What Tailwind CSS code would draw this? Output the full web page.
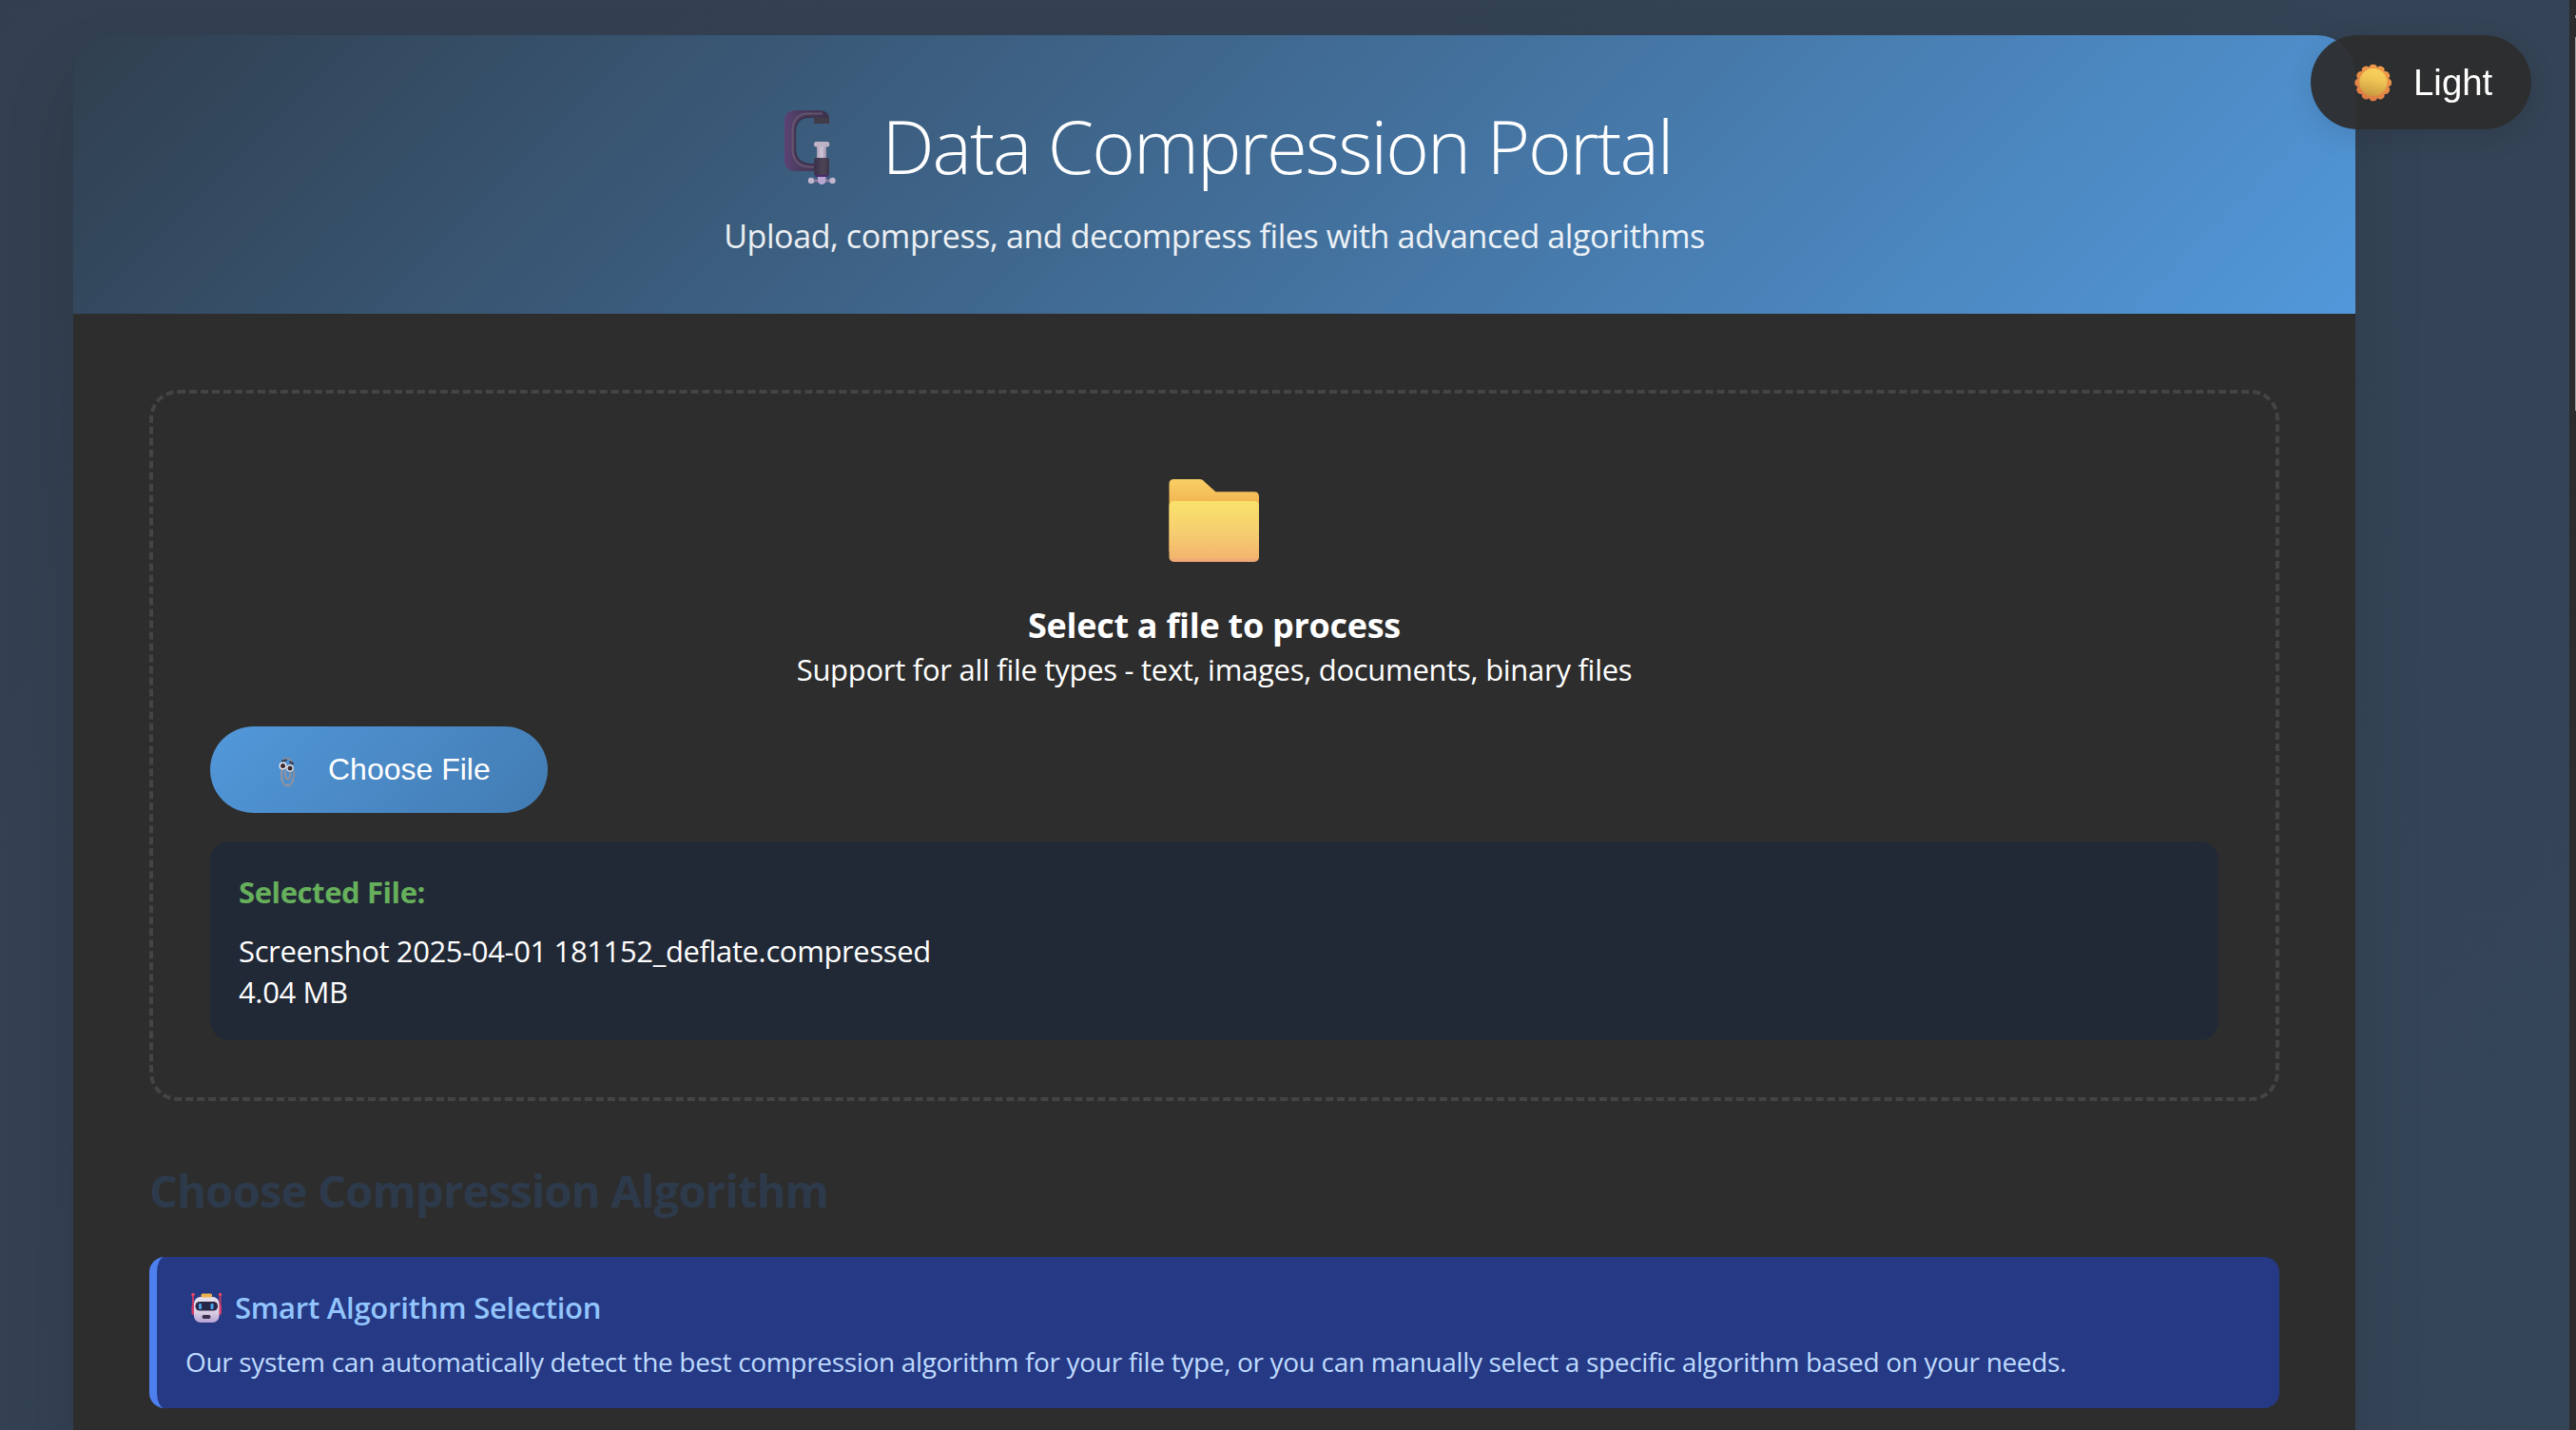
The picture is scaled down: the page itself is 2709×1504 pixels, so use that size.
<!DOCTYPE html>
<html lang="en">
<head>
<meta charset="utf-8">
<title>Data Compression Portal</title>
<script src="https://cdn.jsdelivr.net/npm/@tailwindcss/browser@4"></script>
</head>
<body class="h-[1504px] w-[2709px] overflow-hidden font-['Open_Sans',sans-serif] text-white">
<div class="flex h-full w-full">
  <div class="h-full w-[2702px] overflow-hidden bg-[linear-gradient(135deg,#323f50,#354558)] pt-[37px] pl-[77px]">
    <main class="h-[1600px] w-[2400px] overflow-hidden rounded-t-[40px] bg-[#2d2d2d] shadow-[0_40px_80px_rgba(0,0,0,0.1)]">
      <header class="h-[293px] bg-[linear-gradient(135deg,#303f4f,#5298da)] pt-[60px]">
        <h1 class="flex items-center justify-center gap-[22px] text-[78px] leading-[112px] font-light tracking-[-1.95px]">
          <svg class="h-[110px] w-[110px]" viewBox="796 98 110 110">
            <defs>
              <linearGradient id="frame" x1="0" x2="1"><stop offset="0" stop-color="#5d4176"/><stop offset=".25" stop-color="#4f3d63"/><stop offset="1" stop-color="#3b3049"/></linearGradient>
              <linearGradient id="rod" x1="0" x2="1"><stop offset="0" stop-color="#a99cb5"/><stop offset=".5" stop-color="#d0c8da"/><stop offset="1" stop-color="#9d90ab"/></linearGradient>
              <linearGradient id="nut" x1="0" x2="1"><stop offset="0" stop-color="#3b2f49"/><stop offset=".6" stop-color="#4d4657"/><stop offset="1" stop-color="#3c3447"/></linearGradient>
            </defs>
            <path fill="url(#frame)" d="M837 116H863Q873 116 873 126V130H857.500V124H850Q838 125 838 139V158Q839 171 852 172H858V180H837Q826 179 826 168V128Q826 117 837 116Z"/>
            <path fill="none" stroke="#65566f" stroke-width="2" d="M866 119.500H849Q834.500 121 834.500 138V159Q836 174 850 175.500H857"/>
            <path fill="none" stroke="#3c3149" stroke-width="1.500" d="M858 123.200H850Q837.300 124.500 837.300 139V158Q838.500 171.500 852 172.700H857"/>
            <rect x="857.300" y="123.500" width="15.700" height="6.500" rx="1" fill="#423b48"/>
            <rect x="860" y="153" width="10" height="15" fill="url(#rod)"/>
            <rect x="857" y="149" width="16.300" height="5.500" rx="2.500" fill="#bdb3c4"/>
            <rect x="857.300" y="166" width="15.700" height="19" rx="2" fill="url(#nut)"/>
            <rect x="858.500" y="184" width="13.500" height="2" fill="#4a2869"/>
            <rect x="854" y="188.700" width="23" height="2.800" fill="#92779f"/>
            <circle cx="854" cy="190" r="3.200" fill="#c2b6ce"/><circle cx="876.500" cy="190" r="3.200" fill="#c2b6ce"/>
            <path d="M861 186H869.500V190Q869 194 865.300 194T861 190Z" fill="#b7a6cf"/>
          </svg>
          <span>Data Compression Portal</span>
        </h1>
        <p class="mt-[15px] text-center text-[34px] leading-[48px] tracking-[-0.4px] text-white/90">Upload, compress, and decompress files with advanced algorithms</p>
      </header>

      <div class="p-20">
        <section class="h-[748px] rounded-[30px] border-4 border-dashed border-[#444] px-[60px] pt-[60px]">
          <div class="flex h-[161px] justify-center pt-[10px]">
            <svg class="h-32 w-32" viewBox="1213 484 128 128">
              <defs>
                <linearGradient id="fback" x1="0" x2="0" y1="0" y2="1"><stop offset="0" stop-color="#f9cf66"/><stop offset=".28" stop-color="#f3b955"/><stop offset="1" stop-color="#f0b050"/></linearGradient>
                <linearGradient id="ffront" x1="0" x2="0" y1="0" y2="1"><stop offset="0" stop-color="#f9e26c"/><stop offset=".5" stop-color="#f6cf70"/><stop offset=".92" stop-color="#f3b66e"/><stop offset="1" stop-color="#eda377"/></linearGradient>
              </defs>
              <path fill="url(#fback)" d="M1234.500 504H1262Q1265 504 1267 507L1278.500 517.300H1319Q1324 517.300 1324 522.500V580H1229.500V509Q1229.500 504 1234.500 504Z"/>
              <rect x="1229.500" y="527" width="94.500" height="64" rx="5" fill="url(#ffront)"/>
            </svg>
          </div>
          <h3 class="text-center text-[36px] leading-[46px] font-bold tracking-[-0.28px]">Select a file to process</h3>
          <p class="text-center text-[31px] leading-[46px] tracking-[-0.28px]">Support for all file types - text, images, documents, binary files</p>
          <button class="mt-[37px] flex h-[91px] w-[355px] items-center gap-5 rounded-full bg-[linear-gradient(135deg,#5298da,#427bb2)] pl-[60px] font-['Liberation_Sans',Arial,sans-serif] text-[32px]">
            <svg class="h-11 w-11 shrink-0" viewBox="281 787.500 44 44" fill="none" stroke-linecap="round">
              <path stroke="#8e8c93" stroke-width="1.800" d="M298 799C300 796 306 796 307.500 803M296.500 809V818C297 829 308 829 308.500 818L309.500 811M300 810V814C300 821 305.500 821 305.500 814V810"/>
              <path stroke="#aaa5aa" stroke-width=".7" d="M296 810V818C297 826 306 829 308 819M300 811V815C301 819 304 819 305 814"/>
              <circle cx="297.500" cy="805" r="4" fill="#e9e6ea"/><circle cx="305" cy="807.500" r="3.800" fill="#e9e6ea"/>
              <circle cx="297.500" cy="805" r="2.500" fill="#392b32"/><circle cx="305" cy="807.500" r="2.500" fill="#392b32"/>
              <path stroke="#3b3f50" stroke-width="2" d="M297 799.800L301 799M305 801L308 802.500"/>
            </svg>
            <span class="-mt-0.5 whitespace-nowrap">Choose File</span>
          </button>
          <div class="mt-[30px] h-[209px] rounded-[20px] bg-[#222936] px-[30px] pt-[30px] text-[31px] leading-[43px]">
            <h4 class="mb-[18px] leading-[46px] font-bold tracking-[-0.4px] text-[#66b05c]">Selected File:</h4>
            <p class="tracking-[-0.37px]">Screenshot 2025-04-01 181152_deflate.compressed</p>
            <p class="tracking-[-0.37px]">4.04 MB</p>
          </div>
        </section>

        <h2 class="mt-[62px] text-[47px] leading-[64px] font-bold tracking-[-0.75px] text-[#2d3a4b]">Choose Compression Algorithm</h2>

        <section class="mt-[38px] h-[159px] rounded-2xl border-l-8 border-[#4d80ee] bg-[#253985] pt-[31px] pl-[30px]">
          <h4 class="flex items-center gap-2 text-[31px] leading-[44px] font-semibold tracking-[-0.25px] text-[#93c5fd]">
            <svg class="h-11 w-11" viewBox="195 1353 44 44">
              <defs>
                <linearGradient id="bot" x1="0" x2="0" y1="0" y2="1"><stop offset="0" stop-color="#e9e2ee"/><stop offset=".6" stop-color="#d9cee3"/><stop offset="1" stop-color="#b9a2d4"/></linearGradient>
              </defs>
              <path d="M203 1361V1381M231.500 1361V1381" stroke="#c33a67" stroke-width="2"/>
              <circle cx="203" cy="1361.500" r="1.800" fill="#e8485f"/><circle cx="231.500" cy="1361.500" r="1.800" fill="#e8485f"/>
              <rect x="201.500" y="1372" width="5" height="11" rx="2" fill="#d23c66"/><rect x="228" y="1372" width="5" height="11" rx="2" fill="#d23c66"/>
              <rect x="204" y="1364" width="26.500" height="27" rx="7" fill="url(#bot)"/>
              <rect x="211.500" y="1360.500" width="11.500" height="4" rx="1.500" fill="#eeb44a"/>
              <rect x="205.500" y="1369" width="23.500" height="9.500" rx="4.500" fill="#292748"/>
              <rect x="209" y="1371" width="3" height="6" rx="1.200" fill="#49a4e8"/><rect x="221.500" y="1371" width="3" height="6" rx="1.200" fill="#49a4e8"/>
              <rect x="212.500" y="1383" width="9" height="4" rx="2" fill="#38304d"/>
            </svg>
            <span>Smart Algorithm Selection</span>
          </h4>
          <p class="mt-[15px] text-[28px] leading-[40px] tracking-[-0.33px] whitespace-nowrap text-[#bfdbfe]">Our system can automatically detect the best compression algorithm for your file type, or you can manually select a specific algorithm based on your needs.</p>
        </section>
      </div>
    </main>
  </div>
  <div class="relative h-full w-[7px] bg-[#2c2c2c]">
    <div class="absolute top-4 right-0 h-[3px] w-px bg-[#9f9f9f]"></div>
    <div class="absolute top-[39px] right-0 h-[393px] w-px bg-[#9f9f9f]"></div>
  </div>
</div>

<button class="fixed top-[37px] left-[2430px] flex h-[99px] w-[232px] items-center gap-[15px] rounded-full bg-[#2d2d2d]/95 pl-10 font-['Liberation_Sans',Arial,sans-serif] text-[38.4px] shadow-[0_8px_30px_rgba(0,0,0,0.1)]">
  <svg class="h-[53px] w-[53px] shrink-0" viewBox="2470 62 53 53">
    <defs>
      <linearGradient id="sun" x1=".6" x2=".4" y1="0" y2="1"><stop offset="0" stop-color="#f7d25c"/><stop offset=".4" stop-color="#f0c556"/><stop offset="1" stop-color="#c9993f"/></linearGradient>
      <linearGradient id="ray" x1=".8" x2=".2" y1="0" y2="1"><stop offset="0" stop-color="#f2a04a"/><stop offset="1" stop-color="#db7845"/></linearGradient>
    </defs>
    <path id="rays" fill="url(#ray)"/>
    <circle cx="2495.700" cy="88.500" r="14.500" fill="url(#sun)"/>
  </svg>
  <span class="mt-0.5 leading-none">Light</span>
</button>
<script>
  // Twelve rounded rays around the sun disc
  let d = '';
  for (let i = 0; i < 12; i++) {
    const pt = (r, a) => (2495.7 + r * Math.sin(a)).toFixed(2) + ' ' + (89 - r * Math.cos(a)).toFixed(2);
    const s = Math.PI / 6, a = i * s;
    d += (i ? 'L' : 'M') + pt(16.8, a - s / 2) + 'C' + pt(19, a - s * 0.35) + ' ' + pt(19.8, a - s * 0.15) + ' ' + pt(19.2, a) + 'C' + pt(19.8, a + s * 0.15) + ' ' + pt(19, a + s * 0.35) + ' ' + pt(16.8, a + s / 2);
  }
  document.getElementById('rays').setAttribute('d', d + 'Z');
</script>
</body>
</html>
